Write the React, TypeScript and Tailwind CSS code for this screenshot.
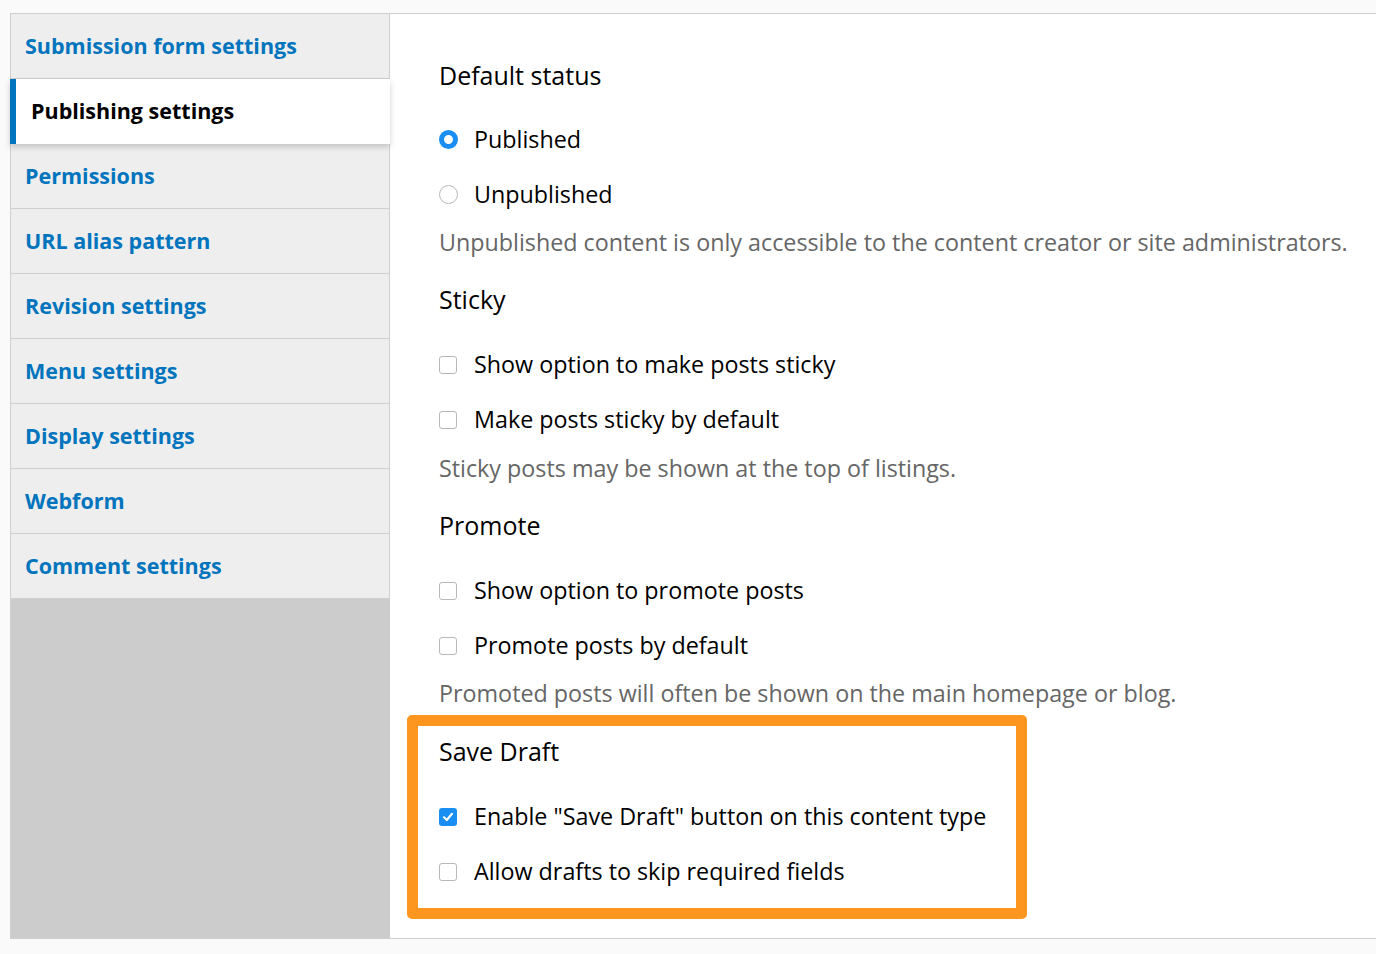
import React from 'react';

const font = { fontFamily: '"Open Sans", "Noto Sans", sans-serif' };

const tabs = [
  'Submission form settings',
  'Publishing settings',
  'Permissions',
  'URL alias pattern',
  'Revision settings',
  'Menu settings',
  'Display settings',
  'Webform',
  'Comment settings',
];

const Radio = ({ checked }: { checked?: boolean }) =>
  checked ? (
    <span className="w-[19px] h-[19px] -mr-px rounded-full border-[5px] border-[#1a8ef2] bg-white shrink-0" />
  ) : (
    <span className="w-[19px] h-[19px] -mr-px rounded-full border border-[#b8b8b8] bg-white shrink-0" />
  );

const Checkbox = ({ checked }: { checked?: boolean }) =>
  checked ? (
    <span className="w-[18px] h-[18px] rounded-[3px] bg-[#1a8ef2] shrink-0 flex items-center justify-center">
      <svg width="12" height="12" viewBox="0 0 12 12" fill="none">
        <path d="M2 6.3 4.8 9 10 2.8" stroke="white" strokeWidth="2.2" strokeLinecap="round" strokeLinejoin="round" />
      </svg>
    </span>
  ) : (
    <span className="w-[18px] h-[18px] rounded-[3px] border border-[#b8b8b8] bg-white shrink-0" />
  );

const Option = ({ label, control }: { label: string; control: React.ReactNode }) => (
  <div className="h-[55px] flex items-center gap-[17px] text-[23.3px] text-black whitespace-nowrap">
    {control}
    <span>{label}</span>
  </div>
);

const Heading = ({ children }: { children: React.ReactNode }) => (
  <div className="h-[40px] flex items-center text-[25px] text-black">{children}</div>
);

const Desc = ({ children }: { children: React.ReactNode }) => (
  <div className="h-[40px] flex items-center text-[23.3px] text-[#666] whitespace-nowrap">{children}</div>
);

export default function App() {
  return (
    <div className="min-h-[954px] bg-[#fafafa] pt-[13px] pl-[10px]" style={font}>
      <div className="flex h-[926px] border-t border-b border-[#cfcfcf]">
        <div className="w-[380px] shrink-0 bg-[#cccccc] border-l border-[#cfcfcf] flex flex-col">
          {tabs.map((t, i) =>
            i === 1 ? (
              <div
                key={t}
                className="h-[65px] bg-white border-l-[6px] border-[#0074bd] pl-[15px] flex items-center text-[21.5px] font-bold text-black relative z-10 shadow-[0_3px_6px_rgba(0,0,0,0.18)] -ml-px"
              >
                {t}
              </div>
            ) : (
              <div
                key={t}
                className="h-[65px] bg-[#eeeeee] border-r border-b border-[#cfcfcf] pl-[14px] flex items-center text-[21.5px] font-bold text-[#0074bd]"
              >
                {t}
              </div>
            )
          )}
        </div>
        <div className="flex-1 bg-white pl-[49px] pt-[42px]">
          <Heading>Default status</Heading>
          <div className="mt-[16px]">
            <Option label="Published" control={<Radio checked />} />
            <Option label="Unpublished" control={<Radio />} />
          </div>
          <Desc>Unpublished content is only accessible to the content creator or site administrators.</Desc>

          <div className="mt-[18px]">
            <Heading>Sticky</Heading>
          </div>
          <div className="mt-[17px]">
            <Option label="Show option to make posts sticky" control={<Checkbox />} />
            <Option label="Make posts sticky by default" control={<Checkbox />} />
          </div>
          <div className="mt-[1px]">
            <Desc>Sticky posts may be shown at the top of listings.</Desc>
          </div>

          <div className="mt-[18px]">
            <Heading>Promote</Heading>
          </div>
          <div className="mt-[17px]">
            <Option label="Show option to promote posts" control={<Checkbox />} />
            <Option label="Promote posts by default" control={<Checkbox />} />
          </div>
          <Desc>Promoted posts will often be shown on the main homepage or blog.</Desc>

          <div className="mt-[2px] -ml-[32px] w-[620px] border-[11px] border-[#fd961f] rounded-[5px] pl-[21px] pt-[6px] pb-[9px]">
            <Heading>Save Draft</Heading>
            <div className="mt-[17px]">
              <Option label={'Enable "Save Draft" button on this content type'} control={<Checkbox checked />} />
              <Option label="Allow drafts to skip required fields" control={<Checkbox />} />
            </div>
          </div>
        </div>
      </div>
    </div>
  );
}
